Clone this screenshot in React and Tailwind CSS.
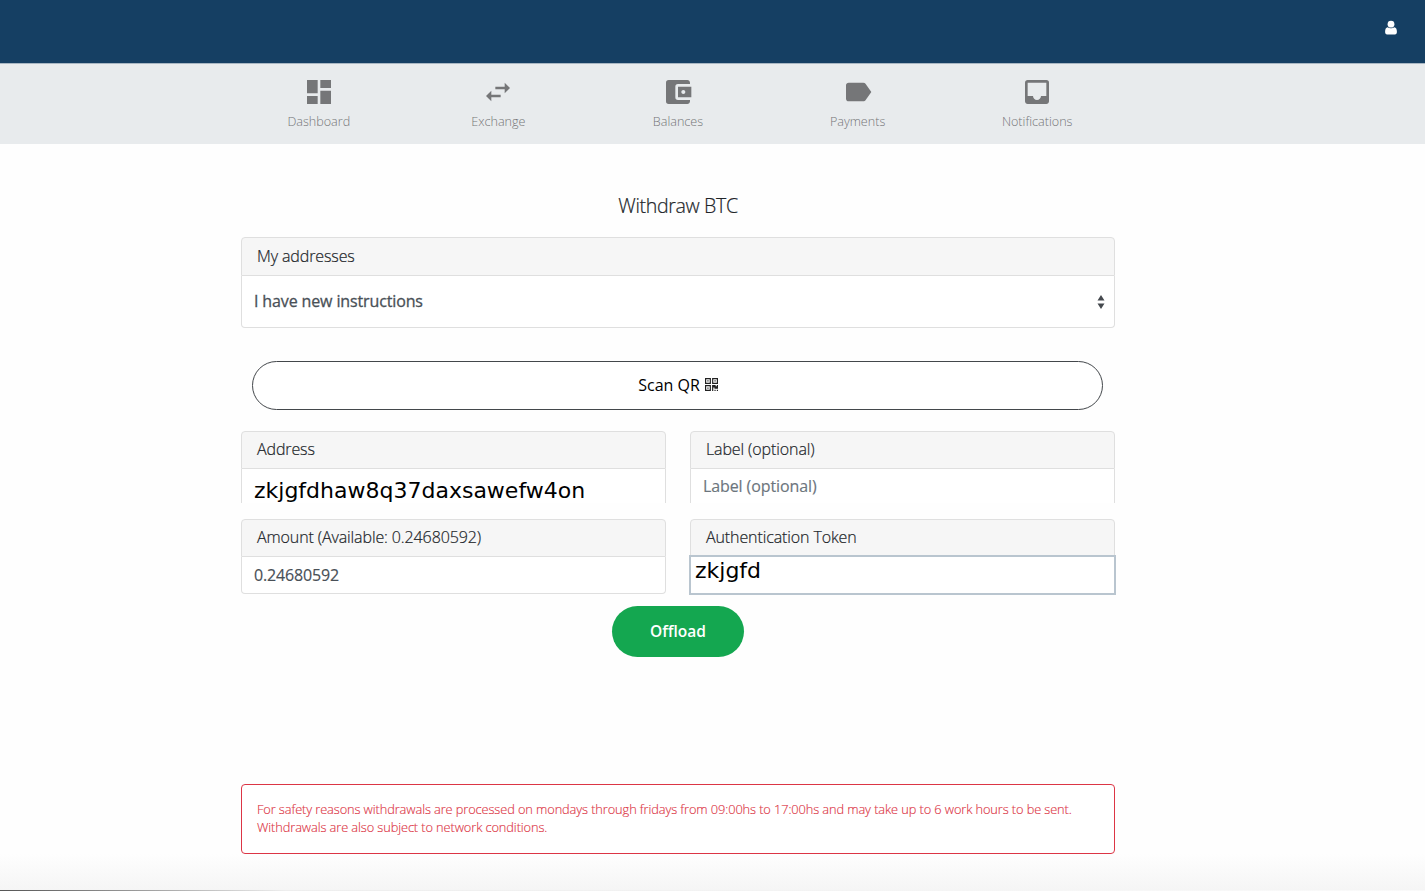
import { MdDashboard, MdSwapHoriz, MdAccountBalanceWallet, MdLabel, MdInbox } from "react-icons/md";

const nav = [
  { name: "Dashboard", Icon: MdDashboard },
  { name: "Exchange", Icon: MdSwapHoriz },
  { name: "Balances", Icon: MdAccountBalanceWallet },
  { name: "Payments", Icon: MdLabel },
  { name: "Notifications", Icon: MdInbox },
];

function UserIcon() {
  return (
    <svg className="h-[15px] w-3" viewBox="0 0 12 15" fill="#fff">
      <circle cx="6" cy="4.2" r="3.4" />
      <path d="M2.7 7.2C1 7.5.1 9 .1 11.7c0 1.7.7 2.8 2 2.8h7.8c1.3 0 2-1.1 2-2.8 0-2.7-.9-4.2-2.6-4.5A4.3 4.3 0 0 1 6 8.3a4.3 4.3 0 0 1-3.3-1.1z" />
    </svg>
  );
}

function QrIcon() {
  return (
    <svg className="h-[13px] w-[13px]" viewBox="0 0 11 11" fill="#222">
      <path fillRule="evenodd" d="M0 0h5v5H0zM1 1v3h3V1zM6 0h5v5H6zM7 1v3h3V1zM0 6h5v5H0zM1 7v3h3V7zM2 2h1v1H2zM8 2h1v1H8zM2 8h1v1H2zM6 6h3v1h1V6h1v3H8V8H7v3H6zM8 10h1v1H8zM10 10h1v1h-1z" />
    </svg>
  );
}

function CardHeader({ className = "", children }) {
  return (
    <div className={"flex items-center rounded-t-[4px] border border-[#dfdfdf] bg-[#f6f6f6] pb-[2px] pl-[15px] text-[16px] leading-6 font-light tracking-[-0.11px] text-[#212529] [-webkit-text-stroke:0.2px] " + className}>
      {children}
    </div>
  );
}

export default function App() {
  return (
    <div className="flex h-[891px] w-full flex-col overflow-hidden bg-[#fefefe] font-['Open_Sans',sans-serif]">
      <header className="flex h-[63px] shrink-0 justify-end bg-[#153f63] pt-5 pr-[28px]">
        <UserIcon />
      </header>
      <nav className="flex h-[81px] shrink-0 justify-center border-t border-[#a9b7c3] bg-[#e8ebed] pr-[69px]">
        <div className="grid w-[898px] grid-cols-5">
          {nav.map(({ name, Icon }) => (
            <a key={name} className="flex flex-col items-center pt-3 text-[#757678]">
              <Icon className="size-8" />
              <span className="mt-[5px] text-[12.6px] leading-[18px] font-light">{name}</span>
            </a>
          ))}
        </div>
      </nav>

      <main className="ml-[241px] flex w-[874px] flex-col">
        <h1 className="mt-[47px] h-[30px] text-center text-[19.6px] leading-[30px] font-light tracking-[-0.35px] text-[#212529] [-webkit-text-stroke:0.2px]">Withdraw BTC</h1>

        <section className="mt-4">
          <CardHeader className="h-[39px]">My addresses</CardHeader>
          <div className="flex h-[52px] items-center justify-between rounded-b-[4px] border border-t-0 border-[#dfdfdf] bg-white pr-[9px] pb-[2px] pl-3">
            <span className="text-[16px] leading-6 tracking-[-0.13px] text-[#495057] [-webkit-text-stroke:0.3px]">I have new instructions</span>
            <svg className="mt-[2px] h-[14px] w-2" viewBox="0 0 8 14" fill="#45494e">
              <path d="M4 0l3.5 5.5h-7zM4 14l3.5-5.5h-7z" />
            </svg>
          </div>
        </section>

        <button className="mr-3 ml-[11px] mt-[33px] flex h-[49px] items-center justify-center gap-[5px] rounded-full border border-[#43474b] bg-white pb-[2px] pl-px text-[16px] text-black">
          <span>Scan QR</span>
          <QrIcon />
        </button>

        <div className="mt-[21px] grid grid-cols-2 gap-x-6 gap-y-4">
          <section className="h-[72px]">
            <CardHeader className="h-[38px]">Address</CardHeader>
            <div className="flex h-[34px] items-center border-x border-[#dfdfdf] bg-white pt-[10px] pl-3 font-['DejaVu_Sans',sans-serif] text-[22px] leading-6 text-black">
              <span>zkjgfdhaw8q37daxsawefw4on</span>
            </div>
          </section>
          <section className="h-[72px]">
            <CardHeader className="h-[38px]">Label (optional)</CardHeader>
            <div className="flex h-[34px] items-center border-x border-[#dfdfdf] bg-white pl-3 text-[16px] leading-6 tracking-[-0.1px] text-[#6c757d] [-webkit-text-stroke:0.15px]">
              <span>Label (optional)</span>
            </div>
          </section>
          <section>
            <CardHeader className="h-[38px]">Amount (Available: 0.24680592)</CardHeader>
            <div className="flex h-[37px] items-center rounded-b-[4px] border border-t-0 border-[#dfdfdf] bg-white pl-3 text-[16px] leading-6 tracking-[-0.15px] text-[#495057] [-webkit-text-stroke:0.15px]">
              <span>0.24680592</span>
            </div>
          </section>
          <section>
            <CardHeader className="h-[38px]">Authentication Token</CardHeader>
            <div className="-mx-px -mt-[2px] flex h-10 items-start border-2 border-[#b9c5cf] bg-white pt-[2px] pl-[4px] font-['DejaVu_Sans',sans-serif] text-[22px] leading-6 text-black">
              <span>zkjgfd</span>
            </div>
          </section>
        </div>

        <button className="mt-[11px] h-[51px] w-[132px] self-center rounded-full bg-[#14a750] text-[15.5px] font-semibold text-white">Offload</button>

        <p className="mt-[127px] h-[70px] rounded-[4px] border border-[#dc3545] bg-white pt-[15px] pl-[15px] text-[12.8px] leading-[18px] font-light tracking-[-0.095px] text-[#dc3545] [-webkit-text-stroke:0.15px]">
          For safety reasons withdrawals are processed on mondays through fridays from 09:00hs to 17:00hs and may take up to 6 work hours to be sent.
          <br />
          Withdrawals are also subject to network conditions.
        </p>
      </main>
      <div className="mt-auto h-9 bg-gradient-to-b from-[#fefefe] to-[#f5f5f5]" />
      <div className="h-px shrink-0 bg-gradient-to-r from-[#555] via-[#eee] via-20% to-[#fafafa]" />
    </div>
  );
}
